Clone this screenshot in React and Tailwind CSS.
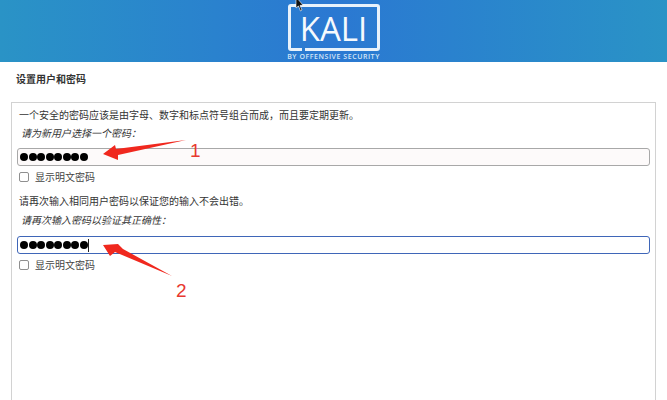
import { useState } from "react";

const cjk = { fontFamily: '"Noto Sans CJK SC", "Liberation Sans", sans-serif' };

// One password block: hint line, italic label, field and the show-password checkbox
function PasswordField({ hint, label, focused, hintClass, labelClass }) {
  return (
    <div>
      <p className={`text-[10px] leading-[14px] text-[#333333] ${hintClass}`}>{hint}</p>
      <p className={`pl-[4px] text-[10px] leading-[14px] italic text-[#333333] ${labelClass}`}>{label}</p>
      <div
        className={
          focused
            ? "flex h-[18px] items-center rounded-[3px] border border-[#3f66b8] bg-white pl-[2px]"
            : "flex h-[18px] items-center rounded-[3px] border border-[#a8a8a8] bg-[#fdfafa] pl-[2px]"
        }
      >
        <span className="flex gap-[0.5px]">
          {[0, 1, 2, 3, 4, 5, 6, 7].map((i) => (
            <span key={i} className="h-[8px] w-[8px] rounded-full bg-black" />
          ))}
        </span>
        {focused && <span className="ml-[0.5px] h-[13px] w-px bg-[#222222]" />}
      </div>
      <div className="mt-[6px] flex items-center gap-[6px] pl-[2px]">
        <span className="h-[10px] w-[10px] rounded-[2px] border border-[#8f8f8f] bg-white" />
        <span className="text-[10px] leading-[10px] text-[#444444]">显示明文密码</span>
      </div>
    </div>
  );
}

export default function App() {
  const [hints] = useState({
    first: "一个安全的密码应该是由字母、数字和标点符号组合而成，而且要定期更新。",
    second: "请再次输入相同用户密码以保证您的输入不会出错。",
  });

  return (
    <div className="relative h-[400px] w-[667px] overflow-hidden bg-white" style={cjk}>
      {/* Banner */}
      <div className="flex h-[62px] justify-center overflow-hidden bg-gradient-to-r from-[#2a93c6] via-[#2b78d2] to-[#2a93c6]">
        <div className="flex w-[92px] flex-col items-center pt-[4px]">
          <div className="relative flex h-[47px] w-[92px] items-center justify-center rounded-[3px] border-[3px] border-[#e8f2fb] pt-[1px]">
            <span
              className="text-[33px] leading-none text-[#f5f9fd]"
              style={{ fontFamily: '"Open Sans", sans-serif' }}
            >
              KALI
            </span>
            {/* notch in the frame's lower edge */}
            <span className="absolute bottom-[-3px] left-[11px] h-[3px] w-[3px] bg-[#2b7ccf]" />
          </div>
          <span
            className="mt-[1px] whitespace-nowrap text-[7px] font-semibold leading-[9px] tracking-[0.55px] text-[#d5e6f7]"
            style={{ fontFamily: '"Open Sans", sans-serif' }}
          >
            BY OFFENSIVE SECURITY
          </span>
        </div>
      </div>

      <h1 className="pl-[16px] pt-[10px] text-[10px] font-bold leading-[14px] text-[#333333]">设置用户和密码</h1>

      {/* Form panel */}
      <div className="mx-[11px] mt-[16px] h-[320px] border border-[#d2d2d2] px-[5px] pt-[5px]">
        <PasswordField hint={hints.first} label="请为新用户选择一个密码：" hintClass="pl-[2px]" labelClass="mt-[4px] mb-[8px]" />
        <div className="h-[12px]" />
        <PasswordField hint={hints.second} label="请再次输入密码以验证其正确性：" focused hintClass="pl-[2px]" labelClass="mt-[5px] mb-[9px]" />
      </div>

      {/* Red annotations over the form */}
      <svg className="absolute left-0 top-0" width="667" height="400" viewBox="0 0 667 400" fill="none">
        <polygon points="186,140 116,149 115,145 103,154 118,160 118,155" fill="#f0281e" />
        <polygon points="172,276 123,249 118,244 103,245 110,256 115,252" fill="#f0281e" />
      </svg>
      <span
        className="absolute left-[190px] top-[140px] text-[19px] leading-[22px] text-[#e8392f]"
        style={{ fontFamily: '"Liberation Sans", sans-serif' }}
      >
        1
      </span>
      <span
        className="absolute left-[176px] top-[280px] text-[19px] leading-[22px] text-[#e8392f]"
        style={{ fontFamily: '"Liberation Sans", sans-serif' }}
      >
        2
      </span>

      {/* Mouse pointer */}
      <svg className="absolute left-[295px] top-0" width="10" height="13" viewBox="0 0 10 13">
        <polygon points="1,-3 1,8 3.5,6 5.5,11 7,10 5,5.5 8,5" fill="#111111" stroke="#ffffff" strokeWidth="0.6" />
      </svg>
    </div>
  );
}
